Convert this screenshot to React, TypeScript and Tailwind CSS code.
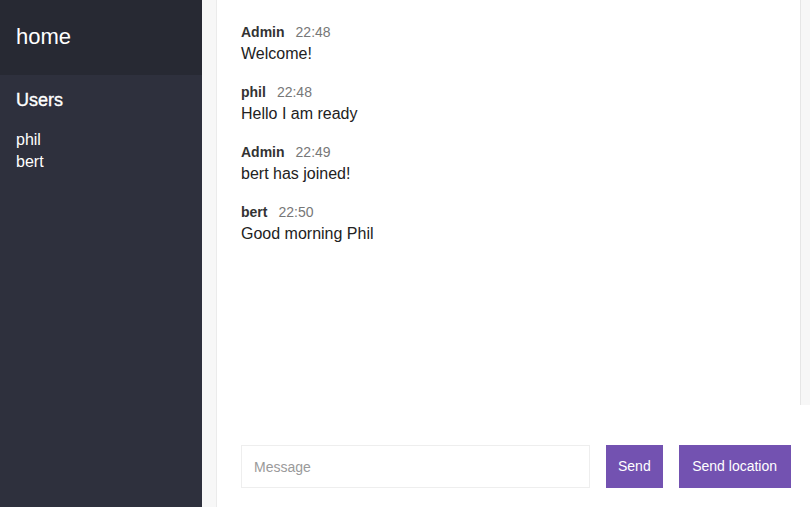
import React from "react";

const messages = [
  { name: "Admin", time: "22:48", text: "Welcome!" },
  { name: "phil", time: "22:48", text: "Hello I am ready" },
  { name: "Admin", time: "22:49", text: "bert has joined!" },
  { name: "bert", time: "22:50", text: "Good morning Phil" },
];

export default function App() {
  return (
    <div
      className="flex w-[810px] h-[507px] overflow-hidden bg-white"
      style={{ fontFamily: '"Liberation Sans", Arial, Helvetica, sans-serif' }}
    >
      <div className="flex flex-col w-[202px] shrink-0 bg-[#2e303d] text-white">
        <div className="h-[75px] shrink-0 flex items-center px-4 bg-[#272933] text-[22px] pb-[3px]">
          home
        </div>
        <div className="px-4 pt-[14px] text-[18px] font-medium leading-[22px] [-webkit-text-stroke:0.35px_white]">
          Users
        </div>
        <ul className="px-4 pt-[18px] text-[16px] font-light leading-[22px]">
          <li>phil</li>
          <li>bert</li>
        </ul>
      </div>
      <div className="w-[15px] shrink-0 bg-[#f7f7f7] border-r border-[#ebebeb]" />
      <div className="flex flex-col flex-1 min-w-0">
        <div className="flex h-[405px] shrink-0">
          <div className="flex-1 pl-6 pt-[22px]">
            {messages.map((m, i) => (
              <div key={i} className="mb-4">
                <div className="h-5 flex items-center text-[14px]">
                  <span className="font-bold text-[#333] mr-[11px]">{m.name}</span>
                  <span className="text-[#777]">{m.time}</span>
                </div>
                <div className="h-6 flex items-center text-[16px] text-[#222]">{m.text}</div>
              </div>
            ))}
          </div>
          <div className="w-[10px] shrink-0 bg-[#f7f7f7] border-l border-[#e6e6e6]" />
        </div>
        <div className="flex pl-6 pt-10 gap-4">
          <input
            className="w-[349px] h-[43px] border border-[#eeeeee] px-3 text-[14px] outline-none placeholder:text-[#9a9a9a]"
            placeholder="Message"
          />
          <button className="h-[43px] px-3 bg-[#7352b1] text-white text-[14px]">Send</button>
          <button className="h-[43px] px-[13.5px] bg-[#7352b1] text-white text-[14px]">Send location</button>
        </div>
      </div>
    </div>
  );
}
